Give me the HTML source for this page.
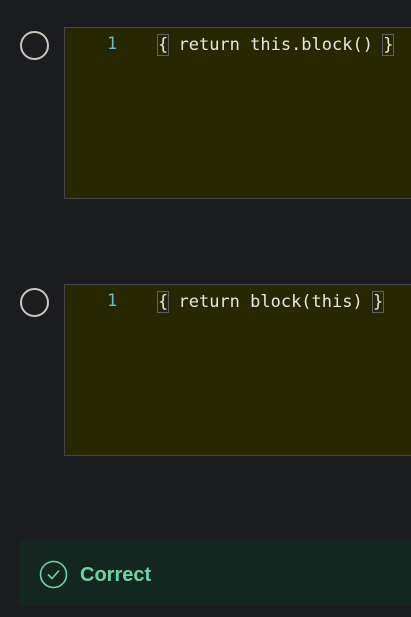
<!DOCTYPE html>
<html><head><meta charset="utf-8"><style>
html,body{margin:0;padding:0;width:411px;height:617px;overflow:hidden;background:#1b1c1f;font-family:"Liberation Sans",sans-serif}
.radio{position:absolute;left:20px;border:2.5px solid #c9c5bd;border-radius:50%;box-sizing:border-box;width:29px;height:29px}
.ed{position:absolute;left:64px;width:360px;height:172px;background:#272700;border:1px solid #44464a;box-sizing:border-box}
.ln{position:absolute;left:42px;top:6px;font:17px "DejaVu Sans Mono",monospace;color:#68b8dc}
.code{position:absolute;left:93px;top:3px;font:17px/28px "DejaVu Sans Mono","Liberation Mono",monospace;color:#e6e6e6;white-space:pre}
.br{outline:1px solid #5a6070;outline-offset:0}
.banner{position:absolute;left:20px;top:541px;width:391px;height:65px;background:#13261f}
</style></head><body>
<div class="radio" style="top:31px"></div>
<div class="ed" style="top:27px"><div class="ln">1</div><div class="code"><span class="br">{</span> return this.block() <span class="br">}</span></div></div>
<div class="radio" style="top:288px"></div>
<div class="ed" style="top:284px"><div class="ln">1</div><div class="code"><span class="br">{</span> return block(this) <span class="br">}</span></div></div>
<div class="banner">
<svg style="position:absolute;left:19px;top:19px" width="29" height="29" viewBox="0 0 29 29"><circle cx="14.5" cy="14.5" r="13" fill="none" stroke="#6ed3a4" stroke-width="1.6"/><path d="M9 14.5l4 4 7-8" fill="none" stroke="#6ed3a4" stroke-width="1.6"/></svg>
<div style="position:absolute;left:60px;top:23px;font-weight:bold;font-size:20px;color:#6ed3a4">Correct</div>
</div>
</body></html>
